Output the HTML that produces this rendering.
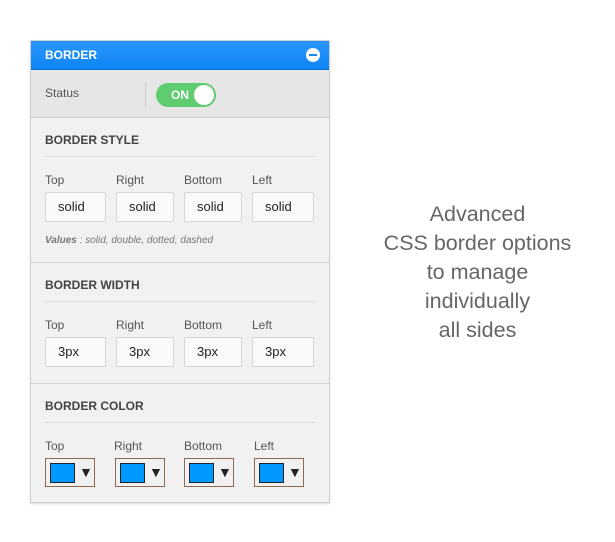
<!DOCTYPE html><html><head><style>
body{margin:0;width:615px;height:542px;background:#fff;font-family:"Liberation Sans",sans-serif;position:relative;overflow:hidden}
.p{position:absolute;left:30px;top:40px;width:298px;height:461px;border:1px solid #d0d0d0;background:#f1f1f1;box-shadow:0 1px 2px rgba(0,0,0,.15)}
.hd{position:absolute;left:0;top:0;width:298px;height:28px;background:linear-gradient(#2a97ff,#0f84f5);border-bottom:1px solid #0a6fd0}
.hd span{position:absolute;left:14px;top:7px;color:#fff;font-weight:bold;font-size:12px}
.mn{position:absolute;right:9px;top:7px;width:14px;height:14px;border-radius:50%;background:#fff}
.mn:after{content:"";position:absolute;left:3px;top:6px;width:8px;height:2px;background:#1186f5}
.st{position:absolute;left:0;top:29px;width:298px;height:47px;background:#e6e6e6;border-bottom:1px solid #d0d0d0}
.a{position:absolute;font-size:12px;color:#555}
.t{position:absolute;font-size:12px;font-weight:bold;color:#444}
.ln{position:absolute;left:14px;width:270px;height:1px;background:#ddd}
.sep{position:absolute;left:0;width:298px;height:1px;background:#d4d4d4}
.in{position:absolute;border:1px solid #d6d6d6;border-radius:2px;background:#f9f9f9;font-size:13px;color:#222;line-height:28px;box-sizing:border-box;height:30px;padding-left:12px}
.cp{position:absolute;width:50px;height:29px;border:1px solid #8f6a52;box-sizing:border-box}
.cp i{position:absolute;left:4px;top:4px;width:23px;height:18px;background:#0099ff;border:1px solid #222}
.cp b{position:absolute;left:33px;top:5px;font-size:14px;color:#222}
.r{position:absolute;left:360px;top:200px;width:235px;text-align:center;font-size:21.5px;line-height:29px;color:#666}
</style></head><body>
<div class="p">
<div class="hd"><span>BORDER</span><div class="mn"></div></div>
<div class="st">
<div class="a" style="left:14px;top:16px">Status</div>
<div style="position:absolute;left:114px;top:13px;width:1px;height:24px;background:#ccc"></div>
<div style="position:absolute;left:125px;top:13px;width:60px;height:24px;border-radius:12px;background:#5fcc6f"><span style="position:absolute;left:15px;top:5px;color:#fff;font-weight:bold;font-size:12px">ON</span><div style="position:absolute;right:2px;top:2px;width:20px;height:20px;border-radius:50%;background:#fff"></div></div>
</div>
<div class="t" style="left:14px;top:92px">BORDER STYLE</div>
<div class="ln" style="top:115px"></div>
<div class="a" style="left:14px;top:132px">Top</div><div class="a" style="left:85px;top:132px">Right</div><div class="a" style="left:153px;top:132px">Bottom</div><div class="a" style="left:221px;top:132px">Left</div>
<div class="in" style="left:14px;top:151px;width:61px">solid</div><div class="in" style="left:85px;top:151px;width:58px">solid</div><div class="in" style="left:153px;top:151px;width:58px">solid</div><div class="in" style="left:221px;top:151px;width:62px">solid</div>
<div style="position:absolute;left:14px;top:194px;font-size:10px;font-style:italic;color:#777"><b>Values</b> : solid, double, dotted, dashed</div>
<div class="sep" style="top:221px"></div>
<div class="t" style="left:14px;top:237px">BORDER WIDTH</div>
<div class="ln" style="top:260px"></div>
<div class="a" style="left:14px;top:277px">Top</div><div class="a" style="left:85px;top:277px">Right</div><div class="a" style="left:153px;top:277px">Bottom</div><div class="a" style="left:221px;top:277px">Left</div>
<div class="in" style="left:14px;top:296px;width:61px">3px</div><div class="in" style="left:85px;top:296px;width:58px">3px</div><div class="in" style="left:153px;top:296px;width:58px">3px</div><div class="in" style="left:221px;top:296px;width:62px">3px</div>
<div class="sep" style="top:342px"></div>
<div class="t" style="left:14px;top:358px">BORDER COLOR</div>
<div class="ln" style="top:381px"></div>
<div class="a" style="left:14px;top:398px">Top</div><div class="a" style="left:83px;top:398px">Right</div><div class="a" style="left:153px;top:398px">Bottom</div><div class="a" style="left:223px;top:398px">Left</div>
<div class="cp" style="left:14px;top:417px"><i></i><b>▼</b></div><div class="cp" style="left:84px;top:417px"><i></i><b>▼</b></div><div class="cp" style="left:153px;top:417px"><i></i><b>▼</b></div><div class="cp" style="left:223px;top:417px"><i></i><b>▼</b></div>
</div>
<div class="r">Advanced<br>CSS border options<br>to manage<br>individually<br>all sides</div>
</body></html>
